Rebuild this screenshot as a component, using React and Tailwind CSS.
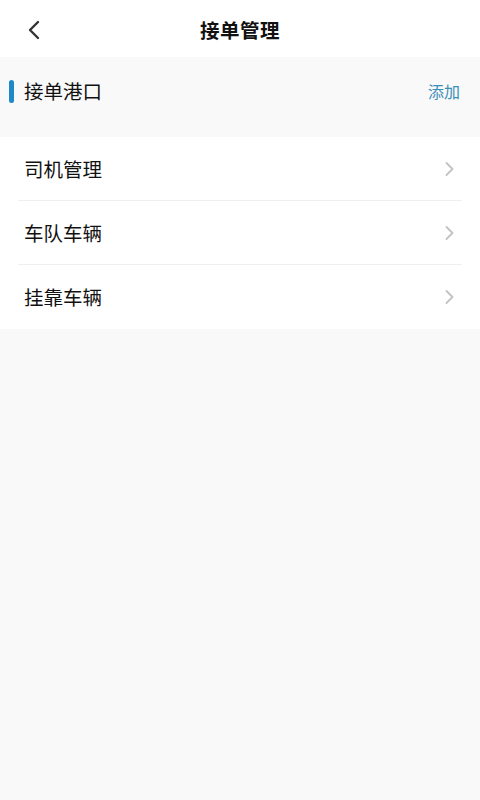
import React from "react";

const Chevron = () => (
  <svg width="14" height="18" viewBox="0 0 14 18" fill="none">
    <path d="M4.5 3 L10.5 9 L4.5 15" stroke="#c2c2c2" strokeWidth="1.8" strokeLinecap="round" strokeLinejoin="round" />
  </svg>
);

export default function App() {
  const rows = ["司机管理", "车队车辆", "挂靠车辆"];
  return (
    <div
      className="w-[480px] h-[800px] bg-[#f9f9f9] flex flex-col"
      style={{ fontFamily: '"Noto Sans CJK SC", "Noto Sans", sans-serif' }}
    >
      <div className="h-[57px] bg-white flex items-center relative shrink-0 pt-[3px]">
        <div className="pl-[26px] flex items-center">
          <svg width="16" height="22" viewBox="0 0 16 22" fill="none">
            <path d="M12 3 L4 11 L12 19" stroke="#333" strokeWidth="2.4" strokeLinecap="round" strokeLinejoin="round" />
          </svg>
        </div>
        <div className="absolute inset-0 pt-[3px] flex items-center justify-center pointer-events-none">
          <span className="text-[19.5px] font-bold text-[#111] tracking-[0.5px]">接单管理</span>
        </div>
      </div>
      <div className="h-[68px] mb-3 flex items-center justify-between pl-[9px] pr-[20px] shrink-0">
        <div className="flex items-center">
          <div className="w-[5px] h-[23px] rounded-full bg-[#1e88c8]" />
          <span className="ml-[10px] text-[19.5px] text-[#111]">接单港口</span>
        </div>
        <span className="text-[16px] text-[#3a8fb8]">添加</span>
      </div>
      <div className="bg-white flex flex-col">
        {rows.map((r, i) => (
          <div key={r} className="mx-[18px]">
            <div className="h-[63px] flex items-center justify-between pl-[6px] pr-[6px]">
              <span className="text-[19.5px] text-[#111]">{r}</span>
              <Chevron />
            </div>
            {i < rows.length - 1 && <div className="h-px bg-[#efefef]" />}
          </div>
        ))}
        <div className="h-px" />
      </div>
    </div>
  );
}
